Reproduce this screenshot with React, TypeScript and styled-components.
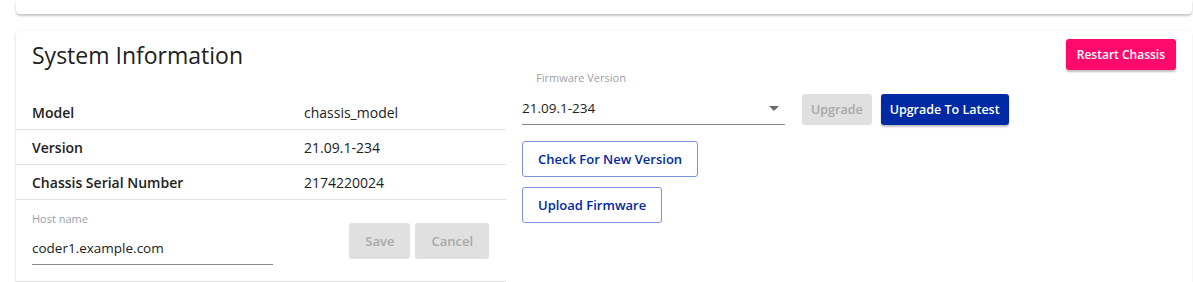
import * as React from 'react';
import styled, { createGlobalStyle } from 'styled-components';

const GlobalStyle = createGlobalStyle`
  body {
    margin: 0;
    background: #ffffff;
    font-family: 'Open Sans', 'Noto Sans', sans-serif;
    color: #212121;
  }
`;

const colors = {
  primary: '#0029a6',
  accent: '#ff0a6c',
  outline: '#7d92dc',
  divider: '#e0e0e0',
  label: '#9aa0ab',
  disabledBg: '#e0e0e0',
  disabledText: '#a8a8a8',
};

const Page = styled.div`
  padding: 0 1px 0 16px;
  display: flex;
  flex-direction: column;
  gap: 17px;
  height: 282px;
  overflow: hidden;
`;

const TopCard = styled.div`
  flex: none;
  height: 14px;
  background: #fff;
  border-radius: 0 0 4px 4px;
  box-shadow: 0 2px 2px rgba(0, 0, 0, 0.18), 0 1px 4px rgba(0, 0, 0, 0.08);
`;

const Card = styled.div`
  flex: none;
  min-height: 300px;
  background: #fff;
  border-radius: 4px;
  box-shadow: 0 1px 3px rgba(0, 0, 0, 0.1), -1px 0 2px rgba(0, 0, 0, 0.05);
`;

const Header = styled.div`
  display: flex;
  justify-content: space-between;
  align-items: flex-start;
  padding: 8px 16px 0;
  height: 56px;
`;

const Title = styled.h2`
  margin: 0;
  font-size: 23px;
  font-weight: 400;
  line-height: 32px;
  color: #212121;
`;

const Body = styled.div`
  display: flex;
  gap: 16px;
`;

const LeftColumn = styled.div`
  width: 490px;
`;

const InfoRow = styled.div`
  display: flex;
  align-items: center;
  height: 34px;
  border-bottom: 1px solid ${colors.divider};
  font-size: 14px;
`;

const InfoLabel = styled.div`
  width: 272px;
  padding-left: 16px;
  font-weight: 600;
`;

const InfoValue = styled.div`
  flex: 1;
`;

const HostRow = styled.div`
  display: flex;
  align-items: flex-end;
  justify-content: space-between;
  padding: 12px 17px 16px 16px;
  border-bottom: 1px solid ${colors.divider};
`;

const Field = styled.div<{ $width: number }>`
  width: ${(p) => p.$width}px;
  display: flex;
  flex-direction: column;
`;

const FieldLabel = styled.label<{ $indent?: number }>`
  font-size: 11px;
  color: ${colors.label};
  line-height: 14px;
  padding-left: ${(p) => p.$indent ?? 0}px;
`;

const InputLine = styled.div<{ $height: number }>`
  display: flex;
  align-items: flex-end;
  justify-content: space-between;
  height: ${(p) => p.$height}px;
  padding-bottom: 7px;
  border-bottom: 1px solid #8a8a8a;
  font-size: 13.5px;
  line-height: 18px;
  box-sizing: border-box;
`;

const ButtonGroup = styled.div`
  display: flex;
  gap: 5px;
  margin-bottom: 6px;
`;

const Button = styled.button<{ $variant: 'contained' | 'outlined' | 'disabled' | 'accent'; $tall?: boolean }>`
  font-family: inherit;
  font-size: 12.5px;
  font-weight: 600;
  border-radius: 3px;
  padding: 0 8px;
  height: ${(p) => (p.$tall ? 36 : 31)}px;
  border: 1px solid transparent;
  cursor: pointer;
  ${(p) =>
    p.$variant === 'contained' &&
    `background: ${colors.primary}; color: #fff; box-shadow: 0 2px 2px rgba(0,0,0,0.25);`}
  ${(p) =>
    p.$variant === 'accent' &&
    `background: ${colors.accent}; color: #fff; box-shadow: 0 2px 2px rgba(0,0,0,0.25); font-size: 12px; padding: 0 10px;`}
  ${(p) =>
    p.$variant === 'outlined' &&
    `background: #fff; color: ${colors.primary}; border-color: ${colors.outline}; font-size: 13px; padding: 0 15px;`}
  ${(p) =>
    p.$variant === 'disabled' &&
    `background: ${colors.disabledBg}; color: ${colors.disabledText}; cursor: default;`}
`;

const DisabledPair = styled(Button)`
  padding: 0 15px;
  font-size: 13px;
`;

const RightColumn = styled.div`
  display: flex;
  flex-direction: column;
  align-items: flex-start;
  gap: 10px;
  margin-top: -24px;
`;

const FirmwareRow = styled.div`
  display: flex;
  align-items: flex-end;
  gap: 9px;
  margin-bottom: 6px;
`;

const Actions = styled.div`
  display: flex;
  gap: 9px;
  margin-left: 8px;
`;

const Caret = () => (
  <svg width="10" height="5" viewBox="0 0 10 5" style={{ marginRight: 6, marginBottom: 6 }}>
    <path d="M0 0 L10 0 L5 5 Z" fill="#6b6b6b" />
  </svg>
);

const info = [
  { label: 'Model', value: 'chassis_model' },
  { label: 'Version', value: '21.09.1-234' },
  { label: 'Chassis Serial Number', value: '2174220024' },
];

export default function App() {
  return (
    <>
      <GlobalStyle />
      <Page>
        <TopCard />
        <Card>
          <Header>
            <Title>System Information</Title>
            <Button $variant="accent">Restart Chassis</Button>
          </Header>
          <Body>
            <LeftColumn>
              {info.map((row) => (
                <InfoRow key={row.label}>
                  <InfoLabel>{row.label}</InfoLabel>
                  <InfoValue>{row.value}</InfoValue>
                </InfoRow>
              ))}
              <HostRow>
                <Field $width={241}>
                  <FieldLabel>Host name</FieldLabel>
                  <InputLine $height={39}>coder1.example.com</InputLine>
                </Field>
                <ButtonGroup>
                  <DisabledPair $variant="disabled" $tall>Save</DisabledPair>
                  <DisabledPair $variant="disabled" $tall>Cancel</DisabledPair>
                </ButtonGroup>
              </HostRow>
            </LeftColumn>
            <RightColumn>
              <FirmwareRow>
                <Field $width={263}>
                  <FieldLabel $indent={14}>Firmware Version</FieldLabel>
                  <InputLine $height={33} style={{ marginTop: 7 }}>
                    21.09.1-234
                    <Caret />
                  </InputLine>
                </Field>
                <Actions>
                  <Button $variant="disabled">Upgrade</Button>
                  <Button $variant="contained">Upgrade To Latest</Button>
                </Actions>
              </FirmwareRow>
              <Button $variant="outlined" $tall>Check For New Version</Button>
              <Button $variant="outlined" $tall>Upload Firmware</Button>
            </RightColumn>
          </Body>
        </Card>
      </Page>
    </>
  );
}
